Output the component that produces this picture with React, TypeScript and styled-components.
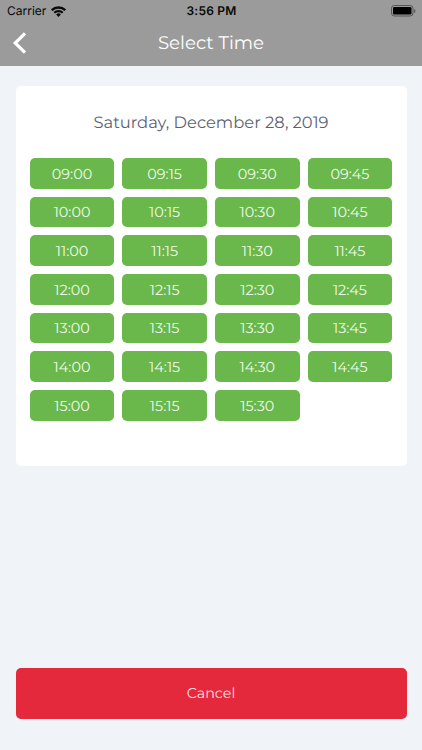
import React from "react";
import styled, { createGlobalStyle } from "styled-components";

const GlobalStyle = createGlobalStyle`
  * { box-sizing: border-box; }
  body { margin: 0; background: #f0f4f8; text-rendering: geometricPrecision; }
  button { border: 0; margin: 0; padding: 0; background: none; cursor: pointer; text-rendering: inherit; }
`;

const Screen = styled.div`
  width: 100%;
  height: 750px;
  display: flex;
  flex-direction: column;
  background: #f0f4f8;
  font-family: Montserrat, Inter, sans-serif;
  font-weight: 400;
`;

const Header = styled.header`
  height: 65.5px;
  flex: none;
  background: #9b9b9b;
`;

const StatusBar = styled.div`
  height: 22px;
  display: grid;
  grid-template-columns: 1fr auto 1fr;
  align-items: center;
  padding: 0 6px 0 7px;
  font-family: Inter, sans-serif;
  color: #090909;
`;

const Carrier = styled.div`
  display: flex;
  align-items: center;
  gap: 5px;
  font-size: 12px;
  line-height: 22px;
`;

const Clock = styled.div`
  font-size: 12px;
  line-height: 22px;
  font-weight: 600;
  letter-spacing: 0.2px;
`;

const BatterySlot = styled.div`
  display: flex;
  justify-content: flex-end;
`;

const NavBar = styled.div`
  height: 42px;
  display: grid;
  grid-template-columns: 44px 1fr 44px;
  align-items: center;
`;

const BackButton = styled.button`
  height: 42px;
  padding-left: 11px;
  display: flex;
  align-items: center;
`;

const Title = styled.h1`
  margin: 0;
  text-align: center;
  font-size: 18.2px;
  line-height: 40px;
  font-weight: 400;
  color: #fff;
`;

const Main = styled.main`
  flex: 1;
  display: flex;
  flex-direction: column;
  justify-content: space-between;
  padding: 20.5px 15.5px 31.5px;
`;

const Card = styled.section`
  height: 379.5px;
  padding: 25px 14.3px 0;
  border-radius: 5px;
  background: #fff;
`;

const DateHeading = styled.h2`
  margin: 0 0 23.2px;
  text-align: center;
  font-size: 16.35px;
  line-height: 24px;
  font-weight: 400;
  color: #5c5f72;
`;

const SlotGrid = styled.div`
  display: grid;
  grid-template-columns: repeat(4, 1fr);
  grid-auto-rows: 30.5px;
  gap: 8.15px;
`;

const Slot = styled.button`
  padding-top: 1.5px;
  border-radius: 5px;
  background: #6ab74b;
  color: #effbe9;
  font-family: inherit;
  font-size: 14.4px;
  line-height: 29px;
  font-weight: 400;
  text-align: center;
`;

const CancelButton = styled.button`
  height: 50.5px;
  border-radius: 5px;
  background: #e3293b;
  color: #ffdfe2;
  font-family: inherit;
  font-size: 14.3px;
  line-height: 50px;
  font-weight: 400;
`;

const WifiIcon = () => (
  <svg width="15" height="11" viewBox="0 0 15 11" fill="none" stroke="#090909" strokeWidth="2.3">
    <path d="M0.8 4.2a9.6 9.6 0 0 1 13.4 0" />
    <path d="M3.3 6.8a6 6 0 0 1 8.4 0" />
    <path d="M5.2 8.5a3.25 3.25 0 0 1 4.6 0L7.5 10.9z" fill="#090909" stroke="none" />
  </svg>
);

const BatteryIcon = () => (
  <svg width="25" height="12" viewBox="0 0 25 12">
    <rect x="0.5" y="0.5" width="21.5" height="10.5" rx="2.8" fill="none" stroke="#555" />
    <rect x="2" y="2" width="18.5" height="7.5" rx="1.3" fill="#000" />
    <path d="M23.2 4v4q1.3-.6 1.3-2t-1.3-2z" fill="#555" />
  </svg>
);

const BackIcon = () => (
  <svg width="16" height="24" viewBox="0 0 16 24" fill="none" stroke="#fff" strokeWidth="3.2">
    <path d="M14 2.4 4.2 12l9.8 9.6" strokeLinejoin="miter" strokeLinecap="butt" />
  </svg>
);

const times: string[] = [];
for (let m = 9 * 60; m <= 15 * 60 + 30; m += 15) {
  times.push(`${String(Math.floor(m / 60)).padStart(2, "0")}:${String(m % 60).padStart(2, "0")}`);
}

export default function App() {
  return (
    <>
      <GlobalStyle />
      <Screen>
        <Header>
          <StatusBar>
            <Carrier>Carrier <WifiIcon /></Carrier>
            <Clock>3:56 PM</Clock>
            <BatterySlot><BatteryIcon /></BatterySlot>
          </StatusBar>
          <NavBar>
            <BackButton aria-label="Back"><BackIcon /></BackButton>
            <Title>Select Time</Title>
          </NavBar>
        </Header>
        <Main>
          <Card>
            <DateHeading>Saturday, December 28, 2019</DateHeading>
            <SlotGrid>
              {times.map((time) => <Slot key={time}>{time}</Slot>)}
            </SlotGrid>
          </Card>
          <CancelButton>Cancel</CancelButton>
        </Main>
      </Screen>
    </>
  );
}
